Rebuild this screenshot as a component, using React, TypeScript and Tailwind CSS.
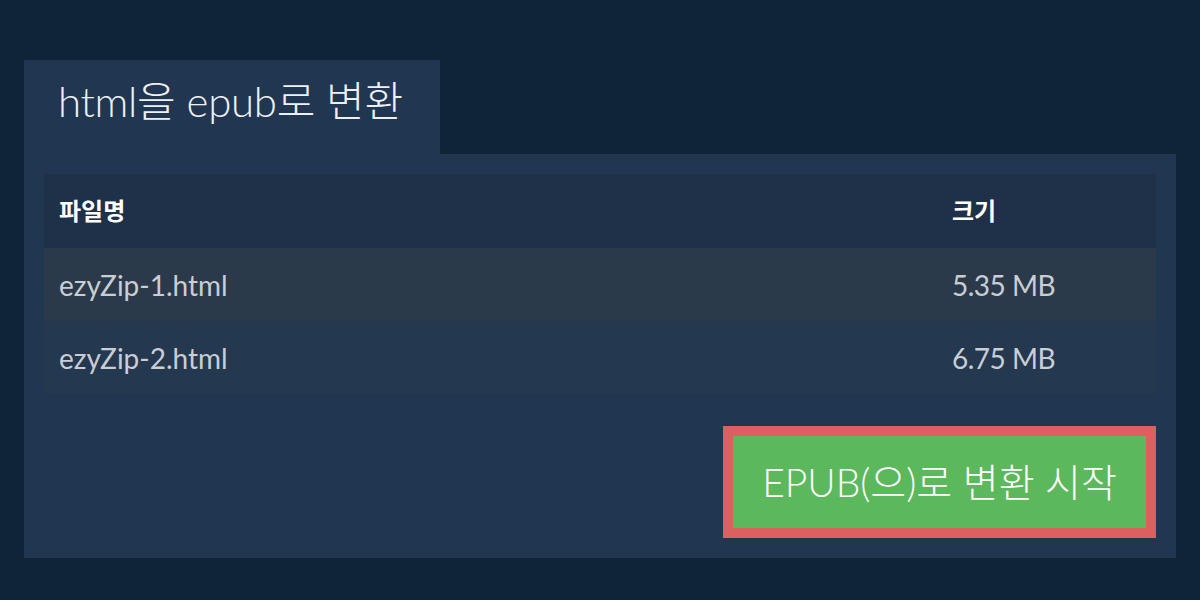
const rows = [
  { name: "ezyZip-1.html", size: "5.35 MB", bg: "bg-[#2b3a4b]" },
  { name: "ezyZip-2.html", size: "6.75 MB", bg: "bg-[#243850]" },
];

export default function App() {
  return (
    <div
      className="w-[1200px] h-[600px] bg-[#0f2339] pt-[60px] px-6"
      style={{ fontFamily: "Lato, 'Noto Sans CJK KR', sans-serif" }}
    >
      <div className="w-[416px] h-[94px] bg-[#213650] pl-[34px] pt-[14px]">
        <h1 className="text-[42px] font-light text-[#eef1f4] leading-[54px] tracking-[-0.3px]">
          html을 epub로 변환
        </h1>
      </div>
      <div className="bg-[#213650] px-5 pt-5 pb-5 flex flex-col">
        <table className="w-full border-collapse text-left">
          <thead>
            <tr className="bg-[#1e3148] h-[74px]">
              <th className="pl-[15px] text-[24px] font-bold text-white">파일명</th>
              <th className="w-[204px] text-[24px] font-bold text-white">크기</th>
            </tr>
          </thead>
          <tbody>
            {rows.map((r) => (
              <tr key={r.name} className={`${r.bg} h-[73px]`}>
                <td className="pl-[15px] text-[28px] text-[#c9ced5]">{r.name}</td>
                <td className="text-[28px] text-[#c9ced5] tracking-[-0.5px]">{r.size}</td>
              </tr>
            ))}
          </tbody>
        </table>
        <div className="flex justify-end mt-8">
          <button className="w-[433px] h-[112px] border-[10px] border-[#dc605d] bg-[#5cb85c] text-white text-[39px] font-light">
            EPUB(으)로 변환 시작
          </button>
        </div>
      </div>
    </div>
  );
}
